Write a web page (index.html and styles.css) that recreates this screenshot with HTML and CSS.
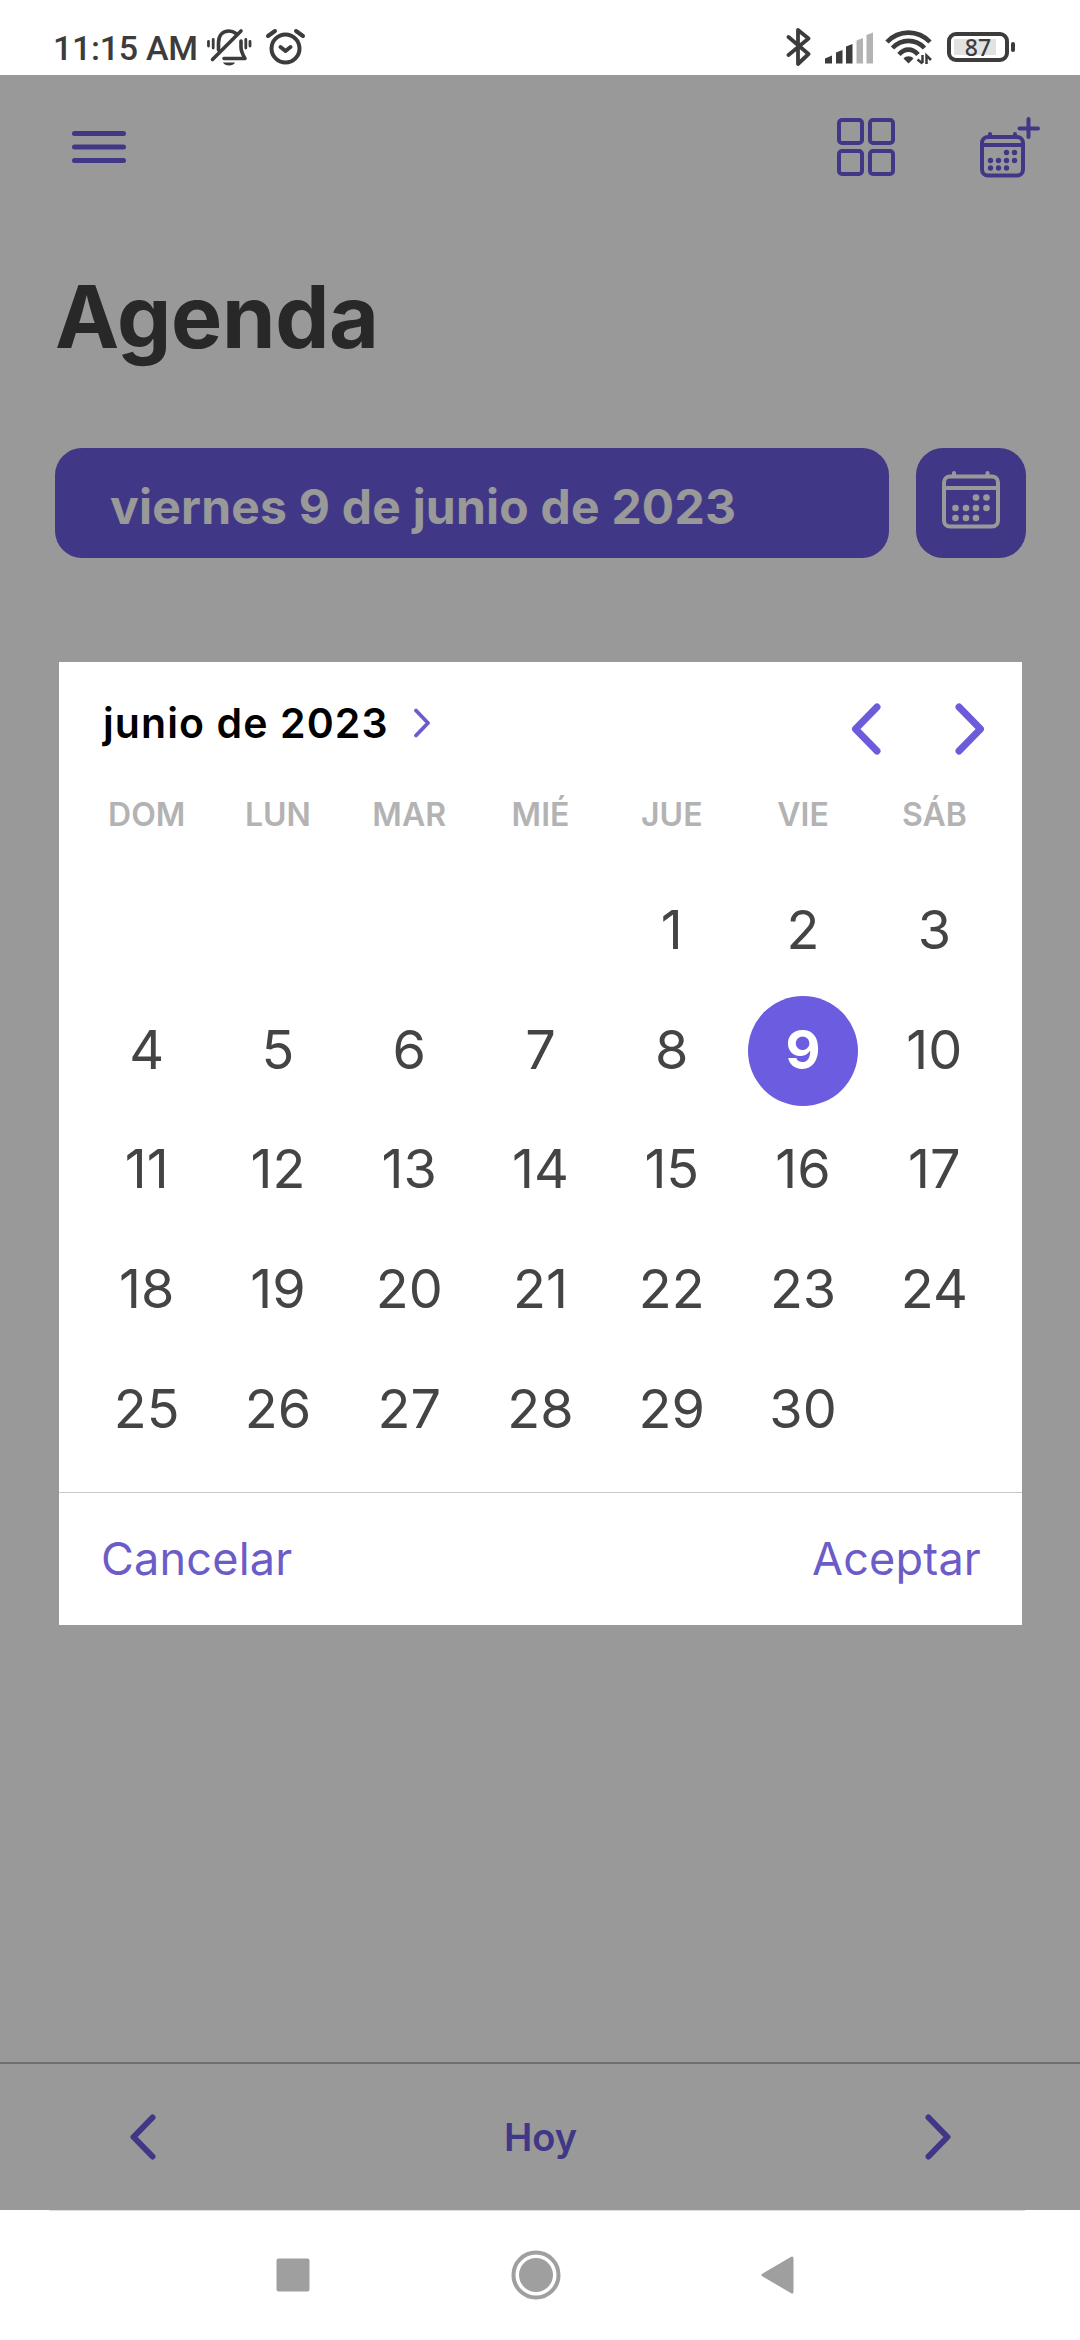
FILE: index.html
```html
<!DOCTYPE html>
<html lang="es">
<head>
    <meta charset="UTF-8">
    <meta name="viewport" content="width=device-width, initial-scale=1.0">
    <title>Agenda</title>
    <link rel="stylesheet" href="styles.css">
</head>
<body>
    <div class="status-bar">
        <span class="time">11:15 AM</span>
        <svg class="icon-mute" width="46" height="40" viewBox="0 0 46 40" fill="none" stroke="#3c3c3c" stroke-width="3.6" stroke-linecap="round" stroke-linejoin="round">
            <path d="M12.5 23V16C12.5 9 16 4 23 4C26 4 28 5 30 6.5M35 14V20C35 25 37 28 39 31.5H18"/>
            <path d="M6.5 32.5L35 4"/>
            <path d="M2.5 14.5V19M7.2 12.5V21M39.8 12.5V21M44 14.5V19" stroke-width="2.8"/>
            <path d="M17 35.5H29C27.5 39.5 18.5 39.5 17 35.5Z" fill="#3c3c3c" stroke="none"/>
        </svg>
        <svg class="icon-alarm" width="42" height="40" viewBox="0 0 42 40" fill="none" stroke="#3c3c3c" stroke-width="4" stroke-linecap="round" stroke-linejoin="round">
            <circle cx="20.5" cy="21.5" r="14"/>
            <path d="M15.5 20L20.5 24L25.500 20"/>
            <path d="M3 9L10 4M31 4L38 9"/>
        </svg>
        <div class="status-right">
            <svg width="26" height="40" viewBox="0 0 26 40" fill="none" stroke="#3c3c3c" stroke-width="3.8" stroke-linecap="round" stroke-linejoin="round">
                <path d="M2.5 10L22.5 27L12 37V3L22.5 11.5L2.5 28"/>
            </svg>
            <svg class="icon-signal" width="48" height="32" viewBox="0 0 48 32" fill="#3c3c3c">
                <path d="M0 31.5V26.5L7 23.5V31.5Z"/>
                <path d="M11 31.5V20.5L17.5 18V31.5Z"/>
                <path d="M21 31.5V14.5L27.5 12V31.5Z"/>
                <path d="M31.5 31.5V8.500L38 6V31.5Z" fill="#b3b3b3"/>
                <path d="M41.5 31.5V3L48 .5V31.5Z" fill="#b3b3b3"/>
            </svg>
            <svg class="icon-wifi" width="48" height="36" viewBox="0 0 48 36" fill="none" stroke="#3c3c3c" stroke-width="4.6">
                <path d="M2 13C14 .5 33 .5 45 13"/>
                <path d="M7.5 19C16.5 9.5 30.5 9.5 39.5 19"/>
                <path d="M14 25.5C19.5 19 27.5 19 33 25.5"/>
                <path d="M18.5 29.5C21 26.5 26 26.5 28.5 29.5L23.5 34.5Z" fill="#3c3c3c" stroke="none"/>
                <path d="M37.5 26V34M32.5 30.5L37.5 34.5M41.5 35V26.5L46 31" stroke-width="2.5"/>
            </svg>
            <div class="battery"><span>87</span></div>
        </div>
    </div>

    <div class="app">
        <div class="toolbar">
            <svg width="54" height="34" viewBox="0 0 54 34" stroke="#6c5cdf" stroke-width="5" stroke-linecap="round">
                <path d="M2.5 3.5H51.5M2.5 17H51.5M2.5 30.5H51.5"/>
            </svg>
            <div class="toolbar-actions">
                <svg width="58" height="58" viewBox="0 0 58 58" fill="none" stroke="#6c5cdf" stroke-width="4">
                    <rect x="2" y="2" width="23" height="23" rx="3"/>
                    <rect x="33" y="2" width="23" height="23" rx="3"/>
                    <rect x="2" y="33" width="23" height="23" rx="3"/>
                    <rect x="33" y="33" width="23" height="23" rx="3"/>
                </svg>
                <svg width="60" height="62" viewBox="0 0 60 62" fill="none" stroke="#6c5cdf" stroke-width="4" stroke-linecap="round">
                    <rect x="2" y="21" width="41" height="38.5" rx="6"/>
                    <path d="M2 29H43M10 18V20M35 18V20M48.5 3V21M39.5 12.5H58"/>
                    <g fill="#6c5cdf" stroke="none">
                        <circle cx="26.5" cy="36.5" r="2.7"/><circle cx="34.5" cy="36.5" r="2.7"/>
                        <circle cx="10.5" cy="44.5" r="2.7"/><circle cx="18.5" cy="44.5" r="2.7"/><circle cx="26.5" cy="44.5" r="2.7"/><circle cx="34.5" cy="44.5" r="2.7"/>
                        <circle cx="10.5" cy="52" r="2.7"/><circle cx="18.5" cy="52" r="2.7"/><circle cx="26.5" cy="52" r="2.7"/>
                    </g>
                </svg>
            </div>
        </div>

        <h1>Agenda</h1>

        <div class="date-row">
            <div class="date-label">viernes 9 de junio de 2023</div>
            <div class="date-button">
                <svg width="58" height="60" viewBox="0 0 58 60" fill="none" stroke="#fff" stroke-width="4" stroke-linecap="round">
                    <rect x="2" y="6.5" width="54" height="50" rx="6"/>
                    <path d="M2 18H56M12 3V6M45.5 3V6"/>
                    <g fill="#fff" stroke="none">
                        <circle cx="34" cy="27.5" r="3.3"/><circle cx="44.5" cy="27.5" r="3.3"/>
                        <circle cx="13.5" cy="38" r="3.3"/><circle cx="24" cy="38" r="3.3"/><circle cx="34" cy="38" r="3.3"/><circle cx="44.5" cy="38" r="3.3"/>
                        <circle cx="13.5" cy="48" r="3.3"/><circle cx="24" cy="48" r="3.3"/><circle cx="34" cy="48" r="3.3"/>
                    </g>
                </svg>
            </div>
        </div>

        <div class="day-nav">
            <svg width="26" height="46" viewBox="0 0 26 46" fill="none" stroke="#6c5cdf" stroke-width="6" stroke-linecap="round" stroke-linejoin="round"><path d="M22.5 3.5L3.5 23L22.5 42.5"/></svg>
            <span class="today">Hoy</span>
            <svg width="26" height="46" viewBox="0 0 26 46" fill="none" stroke="#6c5cdf" stroke-width="6" stroke-linecap="round" stroke-linejoin="round"><path d="M3.5 3.5L22.5 23L3.5 42.5"/></svg>
        </div>

        <div class="overlay">
            <div class="picker">
                <div class="picker-header">
                    <span class="month">junio de 2023</span>
                    <svg class="month-arrow" width="18" height="30" viewBox="0 0 18 30" fill="none" stroke="#6c5ccc" stroke-width="3.8" stroke-linecap="round" stroke-linejoin="round"><path d="M3 2.5L15 15L3 27.5"/></svg>
                    <div class="month-nav">
                        <svg width="30" height="52" viewBox="0 0 30 52" fill="none" stroke="#6c5cdb" stroke-width="7" stroke-linecap="round" stroke-linejoin="round"><path d="M26 4L4.5 26L26 48"/></svg>
                        <svg width="30" height="52" viewBox="0 0 30 52" fill="none" stroke="#6c5cdb" stroke-width="7" stroke-linecap="round" stroke-linejoin="round"><path d="M4 4L25.5 26L4 48"/></svg>
                    </div>
                </div>
                <div class="weekdays">
                    <span>DOM</span><span>LUN</span><span>MAR</span><span>MIÉ</span><span>JUE</span><span>VIE</span><span>SÁB</span>
                </div>
                <div class="days">
                    <span class="first">1</span><span>2</span><span>3</span>
                    <span>4</span><span>5</span><span>6</span><span>7</span><span>8</span><span class="selected">9</span><span>10</span>
                    <span>11</span><span>12</span><span>13</span><span>14</span><span>15</span><span>16</span><span>17</span>
                    <span>18</span><span>19</span><span>20</span><span>21</span><span>22</span><span>23</span><span>24</span>
                    <span>25</span><span>26</span><span>27</span><span>28</span><span>29</span><span>30</span>
                </div>
                <div class="picker-footer">
                    <span>Cancelar</span>
                    <span>Aceptar</span>
                </div>
            </div>
        </div>
    </div>

    <div class="nav-bar">
        <svg width="34" height="34" viewBox="0 0 34 34" fill="#9f9f9f"><rect x=".5" y=".5" width="33" height="33" rx="2"/></svg>
        <svg width="50" height="50" viewBox="0 0 50 50" fill="#9f9f9f"><circle cx="25" cy="25" r="22.5" fill="none" stroke="#9f9f9f" stroke-width="4"/><circle cx="25" cy="25" r="17"/></svg>
        <svg width="33" height="38" viewBox="0 0 33 38" fill="#9f9f9f" stroke="#9f9f9f" stroke-width="3" stroke-linejoin="round"><path d="M2 19L31 2V36Z"/></svg>
    </div>
</body>
</html>
```
FILE: styles.css
```css
body {
    margin: 0;
    height: 2340px;
    display: flex;
    flex-direction: column;
    font-family: Inter, "Liberation Sans", sans-serif;
    color: #444;
    background-color: #fff;
}
svg {
    display: block;
    flex-shrink: 0;
}
.status-bar {
    height: 75px;
    box-sizing: border-box;
    padding: 27px 66px 0 53px;
    display: flex;
    align-items: flex-start;
}
.time {
    width: 145px;
    font-family: Roboto, sans-serif;
    font-size: 34px;
    line-height: 42px;
    font-weight: 500;
    letter-spacing: -0.3px;
    white-space: nowrap;
    color: #3c3c3c;
}
.icon-mute {
    margin-left: 8px;
}
.icon-alarm {
    margin-left: 13px;
}
.status-right {
    margin-left: auto;
    display: flex;
    align-items: flex-start;
}
.icon-signal {
    margin: 5px 0 0 13px;
}
.icon-wifi {
    margin: 2px 0 0 12px;
}
.battery {
    position: relative;
    box-sizing: border-box;
    width: 62px;
    height: 30px;
    margin: 5px 5px 0 14px;
    border: 4px solid #3c3c3c;
    border-radius: 9px;
    background: linear-gradient(#e2e2e2, #e2e2e2) 3px 3px / 42px 16px no-repeat;
    font-family: "Noto Sans", sans-serif;
    font-size: 23px;
    line-height: 23px;
    font-weight: 500;
    text-align: center;
    color: #3c3c3c;
}
.battery::after {
    content: "";
    position: absolute;
    right: -10px;
    top: 6px;
    width: 4px;
    height: 10px;
    border-radius: 2px;
    background-color: #3c3c3c;
}
.app {
    position: relative;
    height: 2135px;
    display: flex;
    flex-direction: column;
}
.toolbar {
    display: flex;
    justify-content: space-between;
    align-items: center;
    height: 144px;
    padding: 0 40px 0 72px;
}
.toolbar-actions {
    display: flex;
    align-items: center;
    gap: 85px;
}
h1 {
    margin: 40px 0 0 55px;
    font-size: 86px;
    line-height: 116px;
    font-weight: 700;
    letter-spacing: -0.3px;
}
.date-row {
    display: flex;
    gap: 27px;
    margin: 73px 54px 0 55px;
}
.date-label {
    flex: 1;
    height: 110px;
    padding-left: 55px;
    border-radius: 27px;
    background-color: #6c5cdf;
    font-size: 48px;
    line-height: 117px;
    font-weight: 700;
    letter-spacing: 0.22px;
    box-sizing: border-box;
    color: #fff;
}
.date-button {
    width: 110px;
    height: 110px;
    border-radius: 27px;
    box-sizing: border-box;
    padding: 22px 26px;
    background-color: #6c5cdf;
}
.day-nav {
    margin-top: auto;
    height: 146px;
    border-top: 2px solid #b7b7b7;
    padding: 0 129px 0 130px;
    display: flex;
    justify-content: space-between;
    align-items: center;
}
.today {
    font-size: 38px;
    font-weight: 600;
    color: #6c5cdf;
}
.overlay {
    position: absolute;
    inset: 0;
    padding: 2px 0 0 1px;
    background-color: rgba(0, 0, 0, 0.4);
    display: flex;
    justify-content: center;
    align-items: center;
}
.picker {
    width: 963px;
    height: 963px;
    background-color: #fff;
    display: flex;
    flex-direction: column;
}
.picker-header {
    height: 112px;
    box-sizing: border-box;
    padding: 10px 37px 0 44px;
    display: flex;
    align-items: center;
}
.month {
    font-size: 41px;
    font-weight: 600;
    letter-spacing: 1.1px;
    color: #000;
}
.month-arrow {
    margin-left: 24px;
}
.month-nav {
    margin: 11px 0 0 auto;
    display: flex;
    gap: 74px;
}
.weekdays, .days {
    display: grid;
    grid-template-columns: repeat(7, 1fr);
    margin: 0 22px;
    text-align: center;
}
.weekdays {
    height: 97px;
    font-size: 32px;
    line-height: 82px;
    font-weight: 600;
    color: #b3b3b3;
}
.days {
    grid-auto-rows: 119.7px;
    font-size: 54px;
    line-height: 118px;
    justify-items: center;
}
.first {
    grid-column: 5;
}
.selected {
    width: 110px;
    height: 110px;
    margin-top: 5px;
    border-radius: 50%;
    line-height: 108px;
    font-weight: 700;
    color: #fff;
    background-color: #6c5cdf;
}
.picker-footer {
    margin-top: auto;
    height: 132px;
    border-top: 1px solid #c8c8c8;
    padding: 0 41px 0 42px;
    display: flex;
    justify-content: space-between;
    line-height: 132px;
    font-size: 45px;
    letter-spacing: 0.2px;
    color: #6c5cc8;
}
.nav-bar {
    flex: 1;
    padding: 0 286px 0 276px;
    display: flex;
    justify-content: space-between;
    align-items: center;
    background: linear-gradient(#dedede, #dedede) 49px 0 / 976px 1px no-repeat;
}
```
